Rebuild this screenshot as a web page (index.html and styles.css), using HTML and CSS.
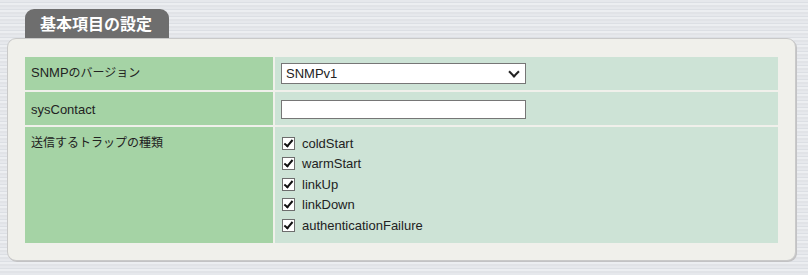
FILE: index.html
```html
<!DOCTYPE html>
<html lang="ja">
<head>
    <meta charset="UTF-8">
    <title>基本項目の設定</title>
    <link rel="stylesheet" href="styles.css">
</head>
<body>
    <div class="page">
        <div class="tab">基本項目の設定</div>
        <div class="panel">
            <div class="settings">
                <div class="label">SNMP<span class="ja">のバージョン</span></div>
                <div class="value">
                    <span class="select-wrap">
                        <select name="version">
                            <option>SNMPv1</option>
                            <option>SNMPv2c</option>
                        </select>
                    </span>
                </div>

                <div class="label middle">sysContact</div>
                <div class="value">
                    <input type="text" name="sysContact">
                </div>

                <div class="label"><span class="ja">送信するトラップの種類</span></div>
                <div class="value traps">
                    <label><input type="checkbox" checked> coldStart</label>
                    <label><input type="checkbox" checked> warmStart</label>
                    <label><input type="checkbox" checked> linkUp</label>
                    <label><input type="checkbox" checked> linkDown</label>
                    <label><input type="checkbox" checked> authenticationFailure</label>
                </div>
            </div>
        </div>
    </div>
</body>
</html>
```

FILE: styles.css
```css
body {
    margin: 0;
    font-family: "Liberation Sans", "Noto Sans CJK JP", sans-serif;
    font-size: 13px;
    color: #222;
    background-color: #e3e5e9;
    background-image: repeating-linear-gradient(180deg,
        #e6e8ec 0px, #e6e8ec 2px,
        #dcdfe4 2px, #dcdfe4 3px,
        #eceef1 3px, #eceef1 5px,
        #e1e3e7 5px, #e1e3e7 7px);
    min-height: 275px;
}

.page {
    padding: 9px 0 0 7px;
}

.tab {
    margin-left: 18px;
    width: 144px;
    height: 29px;
    box-sizing: border-box;
    background-color: #6e6e6e;
    border-radius: 9px 9px 0 0;
    color: #fff;
    font-family: "Noto Sans CJK JP", sans-serif;
    font-weight: bold;
    font-size: 16px;
    line-height: 29px;
    padding-left: 15px;
}

.panel {
    width: 789px;
    box-sizing: border-box;
    background-color: #f0f0eb;
    border: 1px solid #c9c9c9;
    border-radius: 9px;
    box-shadow: 1px 1px 0 #c2c2c4;
    padding: 18px 17px 17px 17px;
}

.settings {
    display: grid;
    grid-template-columns: 248px 1fr;
    grid-template-rows: 33px 33px 116px;
    gap: 2px;
}

.label {
    background-color: #a5d3a5;
    padding: 6px 6px 0 6px;
    line-height: 18px;
}

.label.middle {
    padding-top: 9px;
}

.ja {
    font-family: "Noto Sans CJK JP", sans-serif;
    font-size: 12px;
}

.value {
    background-color: #cde3d6;
    padding: 0 6px;
    display: flex;
    align-items: center;
}

.select-wrap {
    position: relative;
    display: inline-block;
}

.select-wrap:after {
    content: '';
    position: absolute;
    right: 8px;
    top: 5px;
    width: 6px;
    height: 6px;
    border-right: 2px solid #222;
    border-bottom: 2px solid #222;
    transform: rotate(45deg);
    pointer-events: none;
}

select {
    appearance: none;
    -webkit-appearance: none;
    width: 245px;
    height: 21px;
    box-sizing: border-box;
    border: 1px solid #767676;
    border-radius: 0;
    background-color: #fff;
    font-family: "Liberation Sans", sans-serif;
    font-size: 13px;
    color: #222;
    padding: 0 4px;
    margin: 0;
    outline: none;
}

input[type="text"] {
    width: 245px;
    height: 19px;
    box-sizing: border-box;
    border: 1px solid #767676;
    border-radius: 0;
    margin: 2px 0 0 0;
    padding: 0 3px;
    outline: none;
}

.traps {
    flex-direction: column;
    align-items: flex-start;
    padding-top: 6px;
}

.traps label {
    display: flex;
    align-items: center;
    height: 20.5px;
    line-height: 13px;
}

input[type="checkbox"] {
    appearance: none;
    -webkit-appearance: none;
    width: 13px;
    height: 13px;
    margin: 0 7px 0 1px;
    border: 1px solid #6d6d6d;
    background-color: #fff;
    position: relative;
    flex-shrink: 0;
}

input[type="checkbox"]:checked:after {
    content: '';
    position: absolute;
    left: 3px;
    top: 0px;
    width: 3px;
    height: 7px;
    border-right: 2px solid #111;
    border-bottom: 2px solid #111;
    transform: rotate(40deg);
}
```
